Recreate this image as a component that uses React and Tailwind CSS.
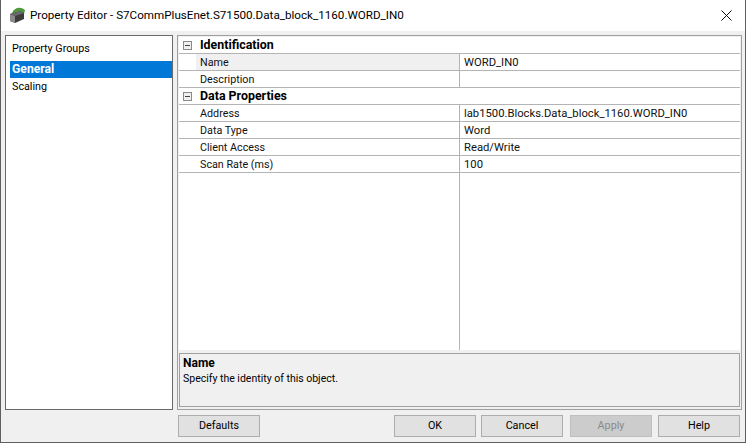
const font = { fontFamily: 'Roboto, "Noto Sans", sans-serif' };

function Section({ label }) {
  return (
    <div className="flex h-[17px] border-b border-[#b4b4b4] text-[12.4px] font-bold text-black leading-[16px]">
      <div className="w-[17px] flex items-center justify-center shrink-0">
        <div className="w-[9px] h-[9px] border border-[#8a8a8a] bg-[#f0f0f0] flex items-center justify-center">
          <div className="w-[5px] h-px bg-[#444]" />
        </div>
      </div>
      <div className="pl-[4px]">{label}</div>
    </div>
  );
}

function Row({ label, value, selected }) {
  return (
    <div className="flex h-[17px] border-b border-[#b4b4b4] text-[#111] leading-[17px]">
      <div className="w-[17px] shrink-0" />
      <div className={`w-[264px] shrink-0 pl-[4px] text-[10.75px] border-r border-[#b4b4b4] ${selected ? "bg-[#f0f0f0]" : ""}`}>{label}</div>
      <div className="pl-[4px] flex-1 text-[11.25px]">{value}</div>
    </div>
  );
}

function Btn({ children, disabled }) {
  return (
    <div className={`w-[82px] h-[22px] flex items-center justify-center text-[10.75px] border ${disabled ? "bg-[#cccccc] border-[#bfbfbf] text-[#8a8a8a]" : "bg-[#e1e1e1] border-[#adadad] text-black"}`}>
      {children}
    </div>
  );
}

export default function App() {
  return (
    <div style={font} className="w-[746px] h-[443px] flex flex-col bg-[#f0f0f0] border-x border-b border-[#5f5f5f] text-black">
      <div className="h-[31px] bg-white flex items-center shrink-0 pl-[8px] pr-[13px]">
        <svg width="17" height="17" viewBox="0 0 17 17" className="shrink-0">
          <path d="M3 6 C5 1 11 -1 16 3 L15 7 C12 4 9 4 7 6Z" fill="#4f9a3c" />
          <path d="M1 7 L11 4 L15 6 L15 12 L6 16 L1 14Z" fill="#3c3c3c" />
          <path d="M1 7 L6 9 L6 16 L1 14Z" fill="#8b8b8b" />
          <path d="M1 7 L11 4 L15 6 L6 9Z" fill="#6a6a6a" />
        </svg>
        <div className="ml-[4px] text-[11.65px] text-black flex-1">Property Editor - S7CommPlusEnet.S71500.Data_block_1160.WORD_IN0</div>
        <svg width="11" height="11" viewBox="0 0 11 11" className="shrink-0">
          <path d="M0.5 0.5 L10.5 10.5 M10.5 0.5 L0.5 10.5" stroke="#111" strokeWidth="1" fill="none" />
        </svg>
      </div>

      <div className="flex gap-[4px] pt-[4px] pl-[4px] pr-[3px] shrink-0">
        <div className="w-[168px] h-[375px] bg-white border border-[#6a6a6a] shrink-0 p-[4px] text-[10.75px]">
          <div className="h-[20px] pl-[2px] pt-px leading-[16px]">Property Groups</div>
          <div className="h-[17px] mt-px bg-[#0078d7] text-white font-bold leading-[17px] pl-[2px] -mr-[4px] text-[12.2px]">General</div>
          <div className="h-[17px] pl-[2px] leading-[18px]">Scaling</div>
        </div>

        <div className="flex-1 h-[375px] border border-[#a0a0a0] pt-px px-px pb-[2px] flex flex-col">
          <div className="flex-1 bg-white relative min-h-0">
            <Section label="Identification" />
            <Row label="Name" value="WORD_IN0" selected />
            <Row label="Description" value="" />
            <Section label="Data Properties" />
            <Row label="Address" value="lab1500.Blocks.Data_block_1160.WORD_IN0" />
            <Row label="Data Type" value="Word" />
            <Row label="Client Access" value="Read/Write" />
            <Row label="Scan Rate (ms)" value="100" />
            <div className="absolute left-[280px] top-[136px] bottom-0 w-px bg-[#b4b4b4]" />
          </div>
          <div className="h-[54px] mt-[3px] border border-[#a0a0a0] bg-[#f0f0f0] px-[3px] pt-[2px] leading-[15px] shrink-0">
            <div className="font-bold text-[12px]">Name</div>
            <div className="text-[10.5px]">Specify the identity of this object.</div>
          </div>
        </div>
      </div>

      <div className="flex shrink-0 pl-[177px] pt-[5px]">
        <Btn>Defaults</Btn>
        <div className="ml-[134px] flex">
          <Btn>OK</Btn>
          <div className="w-[5px]" />
          <Btn>Cancel</Btn>
          <div className="w-[7px]" />
          <Btn disabled>Apply</Btn>
          <div className="w-[6px]" />
          <Btn>Help</Btn>
        </div>
      </div>
    </div>
  );
}
